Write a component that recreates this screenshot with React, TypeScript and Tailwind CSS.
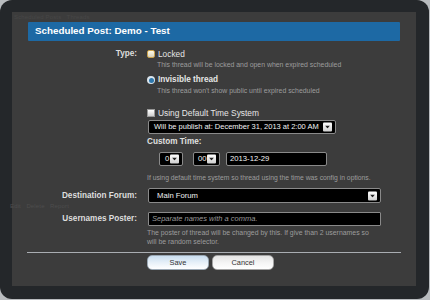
import React from 'react'

const font = { fontFamily: '"Liberation Sans", Arial, sans-serif' }

function Arrow() {
  return (
    <span className="absolute right-[3px] top-1/2 -translate-y-1/2 w-[9px] h-[9px] rounded-[1px] bg-gradient-to-b from-white to-[#cfcfcf] flex items-center justify-center">
      <svg width="5" height="3" viewBox="0 0 5 3">
        <path d="M0 0h5L2.5 3z" fill="#222" />
      </svg>
    </span>
  )
}

function SelectBox({ value, className }: { value: string; className: string }) {
  return (
    <div
      className={`relative bg-black border border-[#8a8a8a] rounded-[2px] text-[#f2f2f2] flex items-center ${className}`}
    >
      {value}
      <Arrow />
    </div>
  )
}

function Row({ label, children, className = '' }: { label?: string; children: React.ReactNode; className?: string }) {
  return (
    <div className={`flex ${className}`}>
      <div className="w-[109px] shrink-0 text-right text-[#dedede] text-[8.2px] font-bold leading-[10px]">
        {label}
      </div>
      <div className="ml-[10px] flex-1">{children}</div>
    </div>
  )
}

export default function App() {
  return (
    <div className="w-[430px] h-[300px] bg-[#b9bcbf] overflow-hidden" style={font}>
      <div className="relative w-[429px] h-[299px] rounded-[12px] bg-[#24272a] pt-[12px] pl-[12px]">
        <div className="relative w-[404px] h-[274px] bg-[#3c3c3c] px-[16px] pt-[10px]">
          {/* faint page text behind overlay */}
          <div className="absolute left-[2px] top-[1px] text-[6px] text-[#474747] tracking-wide">
            Scheduled Posts &nbsp; Threads
          </div>

          {/* Header */}
          <div className="h-[19px] bg-[#1d69a4] rounded-[1px] flex items-center pl-[7px] text-white font-bold text-[9.8px]">
            Scheduled Post: Demo - Test
          </div>

          {/* Type */}
          <Row label="Type:" className="mt-[8px]">
            <div className="flex items-center h-[10px] gap-[3px] text-[#e6e6e6] text-[8.3px]">
              <span className="w-[8px] h-[8px] rounded-[2px] border border-[#c8a04a] bg-gradient-to-b from-[#fffbe8] to-[#d8d2bd]" />
              Locked
            </div>
            <div className="ml-[10px] mt-[1px] h-[10px] leading-[10px] text-[#9c9c9c] text-[6.9px]">
              This thread will be locked and open when expired scheduled
            </div>
            <div className="mt-[5px] flex items-center h-[10px] gap-[3px] text-[#e6e6e6] text-[8.2px] font-bold">
              <span className="w-[8px] h-[8px] rounded-full bg-[#dbe6ee] flex items-center justify-center">
                <span className="w-[5px] h-[5px] rounded-full bg-[#2e78ad]" />
              </span>
              Invisible thread
            </div>
            <div className="ml-[10px] mt-[1px] h-[10px] leading-[10px] text-[#9c9c9c] text-[6.9px]">
              This thread won't show public until expired scheduled
            </div>

            <div className="mt-[12px] flex items-center h-[10px] gap-[3px] text-[#e6e6e6] text-[8.4px]">
              <span className="w-[8px] h-[8px] border border-[#999] bg-gradient-to-b from-white to-[#cfcfcf]" />
              Using Default Time System
            </div>
            <SelectBox
              value="Will be publish at: December 31, 2013 at 2:00 AM"
              className="mt-[2px] ml-[1px] w-[188px] h-[14px] pl-[5px] text-[7.5px]"
            />
            <div className="mt-[3px] h-[10px] leading-[10px] text-[#e0e0e0] text-[8.2px] font-bold">
              Custom Time:
            </div>
            <div className="mt-[5px] flex items-center">
              <SelectBox value="0" className="ml-[12px] w-[24px] h-[14px] pl-[5px] text-[7.7px]" />
              <SelectBox value="00" className="ml-[10px] w-[27px] h-[14px] pl-[4px] text-[7.7px]" />
              <div className="ml-[6px] w-[101px] h-[14px] bg-black border border-[#8a8a8a] rounded-[2px] text-[#f2f2f2] text-[7.7px] flex items-center pl-[3px]">
                2013-12-29
              </div>
            </div>
            <div className="mt-[7px] h-[10px] leading-[10px] text-[#9c9c9c] text-[6.8px] whitespace-nowrap">
              If using default time system so thread using the time was config in options.
            </div>
          </Row>

          <Row label="Destination Forum:" className="mt-[5px] items-center">
            <SelectBox value="Main Forum" className="ml-[1px] w-[233px] h-[15px] pl-[8px] text-[7.7px]" />
          </Row>

          <Row label="Usernames Poster:" className="mt-[9px] items-center">
            <div className="ml-[1px] w-[233px] h-[14px] bg-black border border-[#8a8a8a] rounded-[1px] text-[#9a9a9a] italic text-[7.5px] flex items-center pl-[3px]">
              Separate names with a comma.
            </div>
          </Row>
          <Row className="mt-[2px]">
            <div className="w-[230px] leading-[9px] text-[#9c9c9c] text-[6.9px]">
              The poster of thread will be changed by this. If give than 2 usernames so will be random selector.
            </div>
          </Row>

          <div className="mt-[6px] -ml-[1px] w-[374px] h-px bg-[#a9adb2]" />

          <Row className="mt-[2px]">
            <div className="flex gap-[3px]">
              <button className="w-[62px] h-[15px] rounded-[5px] bg-gradient-to-b from-[#c9def0] via-[#e6f0f8] to-white border border-[#9aa8b4] text-[#333] text-[7.4px]">
                Save
              </button>
              <button className="w-[62px] h-[15px] rounded-[5px] bg-gradient-to-b from-[#e4e4e4] via-[#f4f4f4] to-white border border-[#a4a4a4] text-[#333] text-[7.4px]">
                Cancel
              </button>
            </div>
          </Row>

          {/* faint page text behind overlay */}
          <div className="absolute -left-[2px] top-[190px] text-[6px] text-[#4d4d4d] tracking-wide">
            Edit &nbsp; Delete &nbsp; Report
          </div>
        </div>
      </div>
    </div>
  )
}
